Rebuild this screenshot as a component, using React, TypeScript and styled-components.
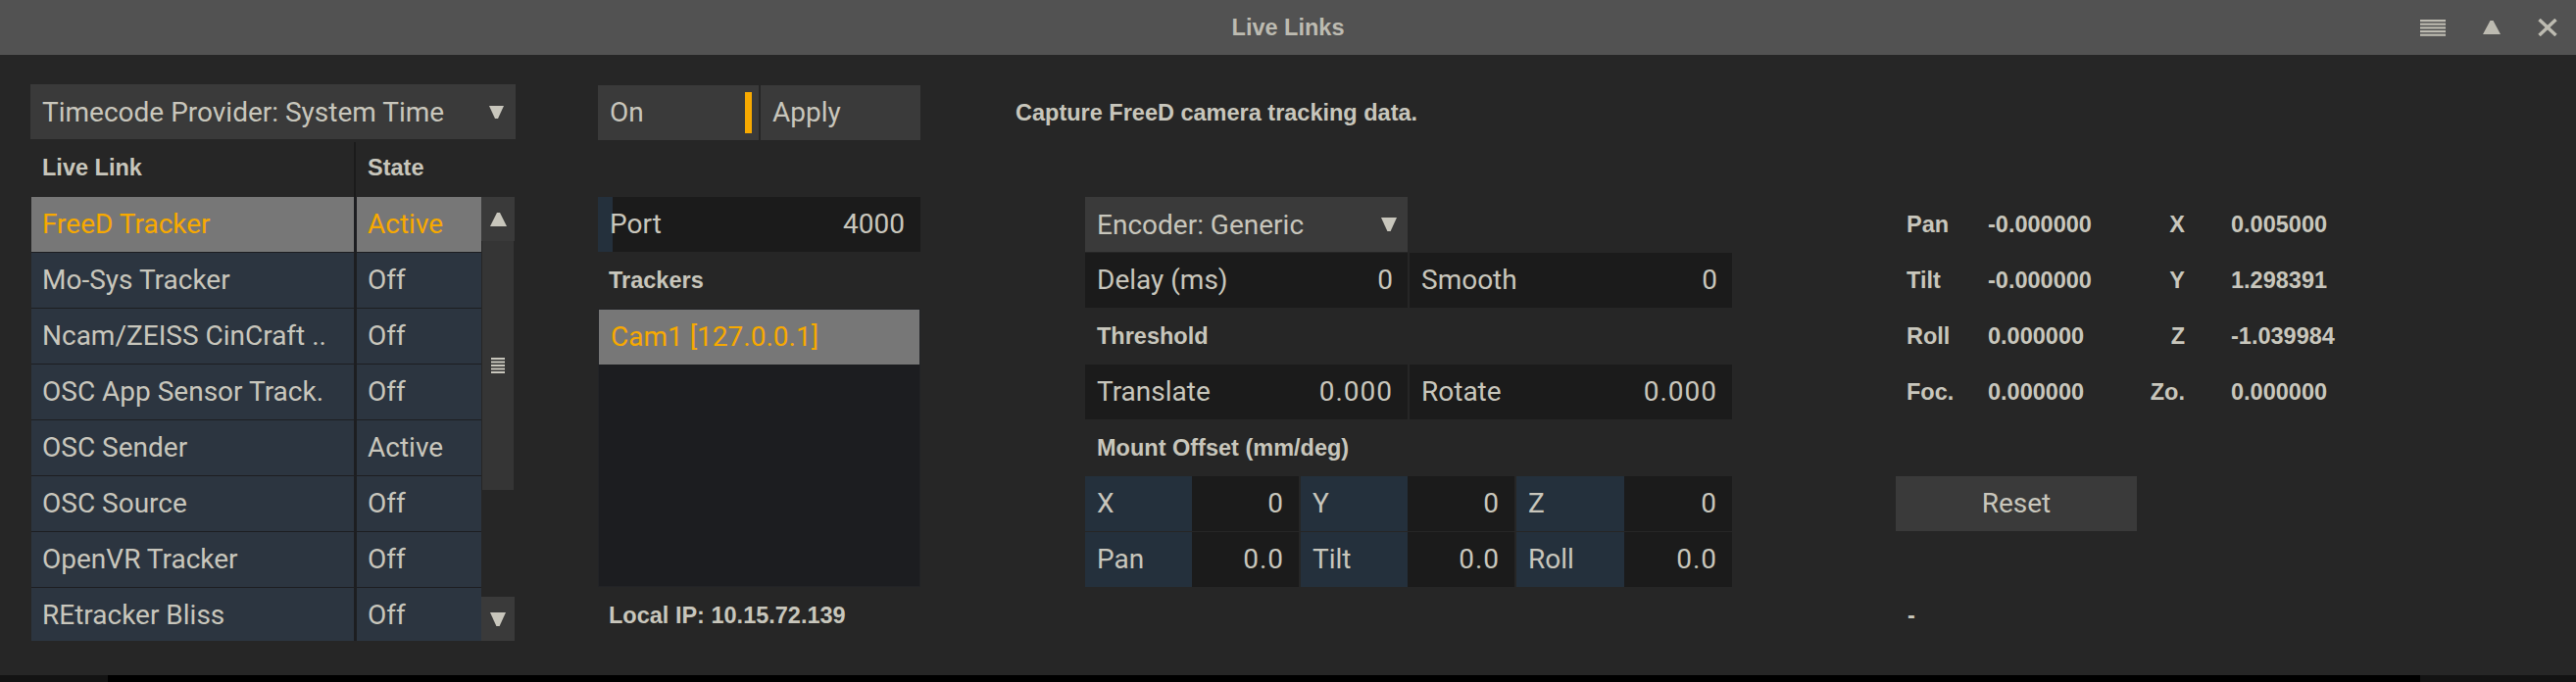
import React from 'react';
import styled, { createGlobalStyle } from 'styled-components';

const C = {
  bg: '#262626',
  title: '#525252',
  text: '#c8c6bc',
  titleText: '#bdbbb1',
  orange: '#f7a900',
  button: '#3a3a3a',
  field: '#1b1b1b',
  blue: '#24303c',
  row: '#2c3540',
  selected: '#777777',
  list: '#1c1d20',
  rule: '#1d1e21',
};

const REG = 'Roboto, "Liberation Sans", Arial, sans-serif';
const BOLD = '"Liberation Sans", Arial, Helvetica, sans-serif';

const GlobalStyle = createGlobalStyle`
  html, body { margin: 0; padding: 0; background: ${C.bg}; overflow: hidden; }
  #root { width: 2628px; height: 696px; }
  * { box-sizing: border-box; }
`;

const Window = styled.div`
  width: 2628px;
  height: 696px;
  display: flex;
  flex-direction: column;
  background: ${C.bg};
  color: ${C.text};
  font-family: ${REG};
  font-size: 28px;
`;

/* ---------- title bar ---------- */
const TitleBar = styled.header`
  flex: none;
  height: 56px;
  background: ${C.title};
  display: grid;
  grid-template-columns: 1fr auto 1fr;
  align-items: center;
`;
const Title = styled.h1`
  grid-column: 2;
  margin: 0;
  font: 700 23.5px ${BOLD};
  color: ${C.titleText};
`;
const WindowControls = styled.div`
  grid-column: 3;
  justify-self: end;
  display: flex;
  align-items: center;
  gap: 38px;
  padding-right: 19px;
`;
const ControlIcon = styled.svg`
  display: block;
  fill: ${C.titleText};
  stroke: ${C.titleText};
`;

/* ---------- main layout ---------- */
const Content = styled.main`
  flex: 1;
  display: flex;
  align-items: flex-start;
  padding: 30px 0 0 31px;
`;
const Column = styled.section<{ $width: number; $offset: number; $gap?: number; $top?: number }>`
  flex: none;
  width: ${(p) => p.$width}px;
  margin-left: ${(p) => p.$offset}px;
  margin-top: ${(p) => p.$top ?? 0}px;
  display: flex;
  flex-direction: column;
  gap: ${(p) => (p.$gap ?? 1)}px;
`;
const Spacer = styled.div`
  height: 56px;
  flex: none;
`;
const BoldLabel = styled.div<{ $pad?: number }>`
  height: 56px;
  flex: none;
  display: flex;
  align-items: center;
  padding-left: ${(p) => p.$pad ?? 12}px;
  font: 700 23.5px ${BOLD};
  color: ${C.text};
  white-space: nowrap;
`;

/* ---------- dropdown ---------- */
const Dropdown = styled.div<{ $width?: number; $padRight?: number }>`
  height: 56px;
  flex: none;
  width: ${(p) => (p.$width ? `${p.$width}px` : '100%')};
  background: ${C.button};
  display: flex;
  align-items: center;
  justify-content: space-between;
  padding: 0 ${(p) => p.$padRight ?? 12}px 0 12px;
  white-space: nowrap;
`;
const Arrow = styled.svg`
  display: block;
  fill: ${C.text};
  flex: none;
`;
const DownArrow = ({ w = 15, h = 13 }: { w?: number; h?: number }) => (
  <Arrow width={w} height={h} viewBox="0 0 15 13">
    <polygon points="0,0 15,0 9,13 6,13" />
  </Arrow>
);
const UpArrow = () => (
  <Arrow width={17} height={14} viewBox="0 0 17 14">
    <polygon points="7,0 10,0 17,14 0,14" />
  </Arrow>
);

/* ---------- left table ---------- */
const TableHeader = styled.div`
  height: 59px;
  margin-left: 1px;
  display: grid;
  grid-template-columns: 329px 3px 127px;
  align-items: center;
`;
const HeaderCell = styled.div`
  padding-left: 11px;
  font: 700 23.5px ${BOLD};
`;
const HeaderRule = styled.div`
  align-self: stretch;
  margin-top: 3px;
  width: 2px;
  background: #1b1b1b;
`;
const TableBody = styled.div`
  margin-left: 1px;
  width: 493px;
  height: 453px;
  display: flex;
`;
const Rows = styled.div`
  width: 459px;
  height: 453px;
  overflow: hidden;
  background: ${C.rule};
  display: flex;
  flex-direction: column;
  gap: 1px;
`;
const Row = styled.div`
  flex: none;
  height: 56px;
  display: grid;
  grid-template-columns: 329px 127px;
  column-gap: 3px;
`;
const Cell = styled.div<{ $selected?: boolean }>`
  display: flex;
  align-items: center;
  padding-left: 11px;
  padding-bottom: 1px;
  white-space: nowrap;
  overflow: hidden;
  background: ${(p) => (p.$selected ? C.selected : C.row)};
  color: ${(p) => (p.$selected ? C.orange : C.text)};
`;
const Scrollbar = styled.div`
  width: 34px;
  height: 453px;
  display: flex;
  flex-direction: column;
`;
const ScrollButton = styled.div`
  height: 45px;
  flex: none;
  background: ${C.button};
  display: flex;
  align-items: center;
  justify-content: center;
`;
const ScrollThumb = styled.div`
  height: 254px;
  flex: none;
  margin: 0 1px;
  background: #353535;
  display: flex;
  align-items: center;
  justify-content: center;
`;
const ScrollTrack = styled.div`
  flex: 1;
`;

/* ---------- middle column ---------- */
const ButtonRow = styled.div`
  height: 56px;
  flex: none;
  display: grid;
  grid-template-columns: 164px 163px;
  column-gap: 2px;
`;
const Button = styled.div<{ $center?: boolean; $width?: number }>`
  height: 56px;
  flex: none;
  width: ${(p) => (p.$width ? `${p.$width}px` : 'auto')};
  background: ${C.button};
  display: flex;
  align-items: center;
  justify-content: ${(p) => (p.$center ? 'center' : 'space-between')};
  padding: 0 ${(p) => (p.$center ? 0 : 7)}px 1px ${(p) => (p.$center ? 0 : 12)}px;
`;
const ToggleIndicator = styled.span`
  width: 7px;
  height: 42px;
  background: ${C.orange};
`;
const SliderField = styled.div<{ $fill: number }>`
  height: 56px;
  flex: none;
  display: flex;
  align-items: center;
  justify-content: space-between;
  padding: 0 16px 1px 12px;
  background: linear-gradient(
    to right,
    ${C.blue} ${(p) => p.$fill}px,
    ${C.field} ${(p) => p.$fill}px
  );
`;
const TrackerList = styled.div`
  height: 284px;
  flex: none;
  background: ${C.list};
  border: 1px solid #222326;
  display: flex;
  flex-direction: column;
`;
const TrackerItem = styled.div<{ $selected?: boolean }>`
  height: 56px;
  flex: none;
  display: flex;
  align-items: center;
  padding: 0 0 1px 12px;
  background: ${(p) => (p.$selected ? C.selected : 'transparent')};
  color: ${(p) => (p.$selected ? C.orange : C.text)};
`;

/* ---------- editor column ---------- */
const Indent = styled.div`
  display: flex;
  flex-direction: column;
  gap: 1px;
  padding-left: 71px;
`;
const FieldPair = styled.div`
  height: 56px;
  flex: none;
  display: grid;
  grid-template-columns: 329px 329px;
  column-gap: 2px;
`;
const Field = styled.div`
  display: flex;
  align-items: center;
  justify-content: space-between;
  padding: 0 15px 1px 12px;
  background: ${C.field};
  white-space: nowrap;
`;
const NumberText = styled.span<{ $spaced?: boolean }>`
  letter-spacing: ${(p) => (p.$spaced ? '1px' : '0')};
`;
const OffsetRow = styled.div`
  height: 56px;
  flex: none;
  display: grid;
  grid-template-columns: 218px 218px 220px;
  column-gap: 2px;
`;
const OffsetGroup = styled.div`
  display: grid;
  grid-template-columns: 1fr 1fr;
`;
const OffsetLabel = styled.div`
  display: flex;
  align-items: center;
  padding: 0 0 1px 12px;
  background: ${C.blue};
`;
const OffsetValue = styled.div`
  display: flex;
  align-items: center;
  justify-content: flex-end;
  padding: 0 15px 1px 0;
  background: ${C.field};
  letter-spacing: 1px;
`;

/* ---------- readout column ---------- */
const ReadoutGrid = styled.div`
  display: grid;
  grid-template-columns: 83px 140px 61px auto;
  grid-auto-rows: 56px;
  row-gap: 1px;
  align-items: center;
  padding-left: 11px;
  font: 700 23.5px ${BOLD};
  white-space: nowrap;
`;
const ReadoutText = styled.span<{ $align?: 'left' | 'right'; $pad?: number }>`
  text-align: ${(p) => p.$align ?? 'left'};
  padding-left: ${(p) => p.$pad ?? 0}px;
`;

/* ---------- bottom strip ---------- */
const BottomStrip = styled.footer`
  flex: none;
  height: 7px;
  display: grid;
  grid-template-columns: 110px 1fr 159px;
`;
const StripSegment = styled.div<{ $tone: string }>`
  background: ${(p) => p.$tone};
`;

/* ---------- data ---------- */
const links = [
  { name: 'FreeD Tracker', state: 'Active', selected: true },
  { name: 'Mo-Sys Tracker', state: 'Off' },
  { name: 'Ncam/ZEISS CinCraft ..', state: 'Off' },
  { name: 'OSC App Sensor Track.', state: 'Off' },
  { name: 'OSC Sender', state: 'Active' },
  { name: 'OSC Source', state: 'Off' },
  { name: 'OpenVR Tracker', state: 'Off' },
  { name: 'REtracker Bliss', state: 'Off' },
];

const offsets = [
  [
    ['X', '0'],
    ['Y', '0'],
    ['Z', '0'],
  ],
  [
    ['Pan', '0.0'],
    ['Tilt', '0.0'],
    ['Roll', '0.0'],
  ],
];

const readouts = [
  ['Pan', '-0.000000', 'X', '0.005000'],
  ['Tilt', '-0.000000', 'Y', '1.298391'],
  ['Roll', '0.000000', 'Z', '-1.039984'],
  ['Foc.', '0.000000', 'Zo.', '0.000000'],
];

const Grip = () => (
  <Arrow width={14} height={17} viewBox="0 0 14 17">
    {[0, 3.5, 7, 10.5, 14].map((y) => (
      <rect key={y} x={0} y={y} width={14} height={2} />
    ))}
  </Arrow>
);

export default function App() {
  return (
    <>
      <GlobalStyle />
      <Window>
        <TitleBar>
          <Title>Live Links</Title>
          <WindowControls>
            <ControlIcon width={26} height={17} viewBox="0 0 26 17" strokeWidth={0}>
              {[0, 3.6, 7.3, 11, 14.6].map((y) => (
                <rect key={y} x={0} y={y} width={26} height={2.2} />
              ))}
            </ControlIcon>
            <ControlIcon width={18} height={14} viewBox="0 0 18 14" strokeWidth={0}>
              <polygon points="7.5,0 10.5,0 18,14 0,14" />
            </ControlIcon>
            <ControlIcon width={20} height={18} viewBox="0 0 20 18" fill="none" strokeWidth={3.4}>
              <line x1={1.5} y1={1} x2={18.5} y2={17} />
              <line x1={18.5} y1={1} x2={1.5} y2={17} />
            </ControlIcon>
          </WindowControls>
        </TitleBar>

        <Content>
          {/* left: provider + link table */}
          <Column $width={495} $offset={0} $gap={0}>
            <Dropdown>
              <span>Timecode Provider: System Time</span>
              <DownArrow />
            </Dropdown>
            <TableHeader>
              <HeaderCell>Live Link</HeaderCell>
              <HeaderRule />
              <HeaderCell>State</HeaderCell>
            </TableHeader>
            <TableBody>
              <Rows>
                {links.map((l) => (
                  <Row key={l.name}>
                    <Cell $selected={l.selected}>{l.name}</Cell>
                    <Cell $selected={l.selected}>{l.state}</Cell>
                  </Row>
                ))}
              </Rows>
              <Scrollbar>
                <ScrollButton>
                  <UpArrow />
                </ScrollButton>
                <ScrollThumb>
                  <Grip />
                </ScrollThumb>
                <ScrollTrack />
                <ScrollButton>
                  <DownArrow w={16} h={14} />
                </ScrollButton>
              </Scrollbar>
            </TableBody>
          </Column>

          {/* middle: connection */}
          <Column $width={329} $offset={84} $top={1}>
            <ButtonRow>
              <Button>
                <span>On</span>
                <ToggleIndicator />
              </Button>
              <Button>
                <span>Apply</span>
              </Button>
            </ButtonRow>
            <Spacer />
            <SliderField $fill={15}>
              <span>Port</span>
              <span>4000</span>
            </SliderField>
            <BoldLabel $pad={11}>Trackers</BoldLabel>
            <TrackerList>
              <TrackerItem $selected>Cam1 [127.0.0.1]</TrackerItem>
            </TrackerList>
            <BoldLabel $pad={11}>Local IP: 10.15.72.139</BoldLabel>
          </Column>

          {/* editor */}
          <Column $width={731} $offset={97} $top={1}>
            <BoldLabel $pad={0}>Capture FreeD camera tracking data.</BoldLabel>
            <Spacer />
            <Indent>
              <Dropdown $width={329} $padRight={11}>
                <span>Encoder: Generic</span>
                <DownArrow w={16} h={14} />
              </Dropdown>
              <FieldPair>
                <Field>
                  <span>Delay (ms)</span>
                  <NumberText>0</NumberText>
                </Field>
                <Field>
                  <span>Smooth</span>
                  <NumberText>0</NumberText>
                </Field>
              </FieldPair>
              <BoldLabel>Threshold</BoldLabel>
              <FieldPair>
                <Field>
                  <span>Translate</span>
                  <NumberText $spaced>0.000</NumberText>
                </Field>
                <Field>
                  <span>Rotate</span>
                  <NumberText $spaced>0.000</NumberText>
                </Field>
              </FieldPair>
              <BoldLabel>Mount Offset (mm/deg)</BoldLabel>
              {offsets.map((row, i) => (
                <OffsetRow key={i}>
                  {row.map(([label, value]) => (
                    <OffsetGroup key={label}>
                      <OffsetLabel>{label}</OffsetLabel>
                      <OffsetValue>{value}</OffsetValue>
                    </OffsetGroup>
                  ))}
                </OffsetRow>
              ))}
            </Indent>
          </Column>

          {/* live readout */}
          <Column $width={420} $offset={167} $top={1}>
            <Spacer />
            <Spacer />
            <ReadoutGrid>
              {readouts.map(([a, av, b, bv]) => (
                <React.Fragment key={a}>
                  <ReadoutText>{a}</ReadoutText>
                  <ReadoutText>{av}</ReadoutText>
                  <ReadoutText $align="right">{b}</ReadoutText>
                  <ReadoutText $pad={47}>{bv}</ReadoutText>
                </React.Fragment>
              ))}
            </ReadoutGrid>
            <Spacer />
            <Button $center $width={246}>
              Reset
            </Button>
            <Spacer />
            <BoldLabel>-</BoldLabel>
          </Column>
        </Content>

        <BottomStrip>
          <StripSegment $tone="#131313" />
          <StripSegment $tone="#000000" />
          <StripSegment $tone="#131313" />
        </BottomStrip>
      </Window>
    </>
  );
}
